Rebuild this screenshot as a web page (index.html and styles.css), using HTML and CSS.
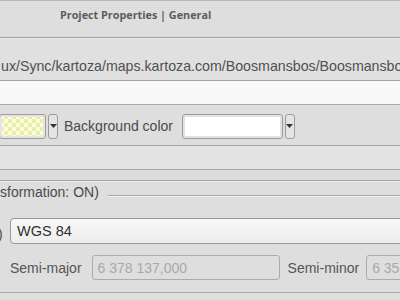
FILE: index.html
```html
<!DOCTYPE html>
<html lang="en">
<head>
    <meta charset="UTF-8">
    <title>Project Properties | General</title>
    <link rel="stylesheet" href="styles.css">
</head>
<body>

<div class="dialog">
    <header class="title-bar">Project Properties | General</header>

    <div class="path-row">ux/Sync/kartoza/maps.kartoza.com/Boosmansbos/Boosmansbos.qgs</div>
    <div class="blank-field"></div>

    <div class="color-row">
        <div class="color-button">
            <span class="swatch swatch-checker"></span>
            <span class="drop"><svg width="7" height="4" viewBox="0 0 7 4"><path d="M0 0h7L3.5 4z" fill="#333"/></svg></span>
        </div>
        <span class="label">Background color</span>
        <div class="color-button">
            <span class="swatch swatch-white"></span>
            <span class="drop"><svg width="7" height="4" viewBox="0 0 7 4"><path d="M0 0h7L3.5 4z" fill="#333"/></svg></span>
        </div>
    </div>

    <div class="band band-tall"></div>
    <div class="band band-short"></div>

    <section class="group">
        <div class="group-title">
            <span>sformation: ON)</span>
            <span class="group-rule"></span>
        </div>

        <div class="ellipsoid-row">
            <span class="cut">)</span>
            <div class="combo">WGS 84</div>
        </div>

        <div class="axis-row">
            <span class="label">Semi-major</span>
            <div class="num-field major">6 378 137,000</div>
            <span class="label">Semi-minor</span>
            <div class="num-field minor">6 356 752,314</div>
        </div>
    </section>
</div>

</body>
</html>
```

FILE: styles.css
```css
/* Basic Reset */
*,
*::before,
*::after {
    box-sizing: border-box;
    margin: 0;
    padding: 0;
}

html, body {
    width: 400px;
    height: 300px;
    overflow: hidden;
    background-color: #dedede;
    font-family: "Liberation Sans", Arial, sans-serif;
    color: #4a4a4a;
}

.dialog {
    display: flex;
    flex-direction: column;
    width: 400px;
    overflow: hidden;
}

/* --- Title bar --- */
.title-bar {
    height: 38px;
    padding: 6px 0 0 60px;
    font-family: "Open Sans", sans-serif;
    font-size: 10.8px;
    font-weight: 700;
    color: #5c5c5c;
    border-top: 1px solid #b8b8b8;
    border-bottom: 1px solid #9f9f9f;
}

/* --- Project file path --- */
.path-row {
    height: 43px;
    padding: 18px 0 0 1px;
    font-size: 14.2px;
    line-height: 18px;
    white-space: nowrap;
    overflow: hidden;
    color: #505050;
    background-color: #e0e0e0;
    border-top: 1px solid #ececec;
    border-bottom: 1px solid #a4a4a4;
}

.blank-field {
    height: 24px;
    background-color: #f9f9f9;
    border-bottom: 1px solid #a8a8a8;
}

/* --- Selection / background colour --- */
.color-row {
    height: 41px;
    display: flex;
    align-items: center;
    padding-top: 2px;
    border-bottom: 1px solid #a4a4a4;
}

.color-button {
    display: flex;
    gap: 2px;
    height: 25px;
}

.swatch {
    display: block;
    height: 25px;
    border: 1px solid #9c9c9c;
    border-radius: 3px;
    padding: 2px;
    background-color: #e8e8e8;
}

.swatch-checker {
    width: 47px;
    margin-left: -1px;
    background-image:
        linear-gradient(45deg, #e9f0a0 25%, transparent 25%, transparent 75%, #e9f0a0 75%),
        linear-gradient(45deg, #e9f0a0 25%, #fbfbe8 25%, #fbfbe8 75%, #e9f0a0 75%);
    background-size: 8px 8px;
    background-position: 0 0, 4px 4px;
    box-shadow: inset 0 0 0 2px #e4e4e4;
}

.swatch-white {
    width: 101px;
    background-color: #ffffff;
    box-shadow: inset 0 0 0 2px #e2e2e2;
}

.drop {
    display: flex;
    align-items: center;
    justify-content: center;
    width: 10px;
    height: 25px;
    border: 1px solid #9c9c9c;
    border-radius: 3px;
    background-color: #e4e4e4;
}

.color-row .label {
    margin: 0 9px 0 6px;
    font-size: 14px;
}

.band {
    border-bottom: 1px solid #a8a8a8;
}

.band-tall {
    height: 24px;
    background-color: #e3e3e3;
}

.band-short {
    height: 11px;
    background-color: #dcdcdc;
}

/* --- Ellipsoid group --- */
.group {
    height: 112px;
    display: flex;
    flex-direction: column;
    border-top: 1px solid #ececec;
    border-bottom: 1px solid #a8a8a8;
}

.group-title {
    display: flex;
    align-items: center;
    gap: 9px;
    height: 18px;
    margin-top: 1px;
    font-size: 14px;
    white-space: nowrap;
}

.group-rule {
    flex: 1;
    height: 2px;
    margin-top: 8px;
    border-top: 1px solid #a8a8a8;
    border-bottom: 1px solid #f0f0f0;
}

.ellipsoid-row {
    display: flex;
    align-items: center;
    margin-top: 17px;
    height: 26px;
}

.cut {
    width: 10px;
    text-indent: -2px;
    padding-top: 6px;
    font-size: 14px;
}

.combo {
    flex: 1;
    height: 26px;
    margin-right: -10px;
    padding: 4px 0 0 6px;
    font-size: 14.5px;
    color: #303030;
    background: linear-gradient(#f8f8f8, #ededed);
    border: 1px solid #9a9a9a;
    border-radius: 4px;
}

.axis-row {
    display: flex;
    align-items: center;
    margin-top: 11px;
    padding-left: 10px;
    white-space: nowrap;
}

.axis-row .label {
    font-size: 14px;
    color: #555;
}

.num-field {
    flex-shrink: 0;
    height: 25px;
    padding: 4px 0 0 5px;
    font-size: 14px;
    color: #a9a9a9;
    border: 1px solid #acacac;
    border-radius: 3px;
    background-color: #dedede;
    overflow: hidden;
}

.major {
    width: 188px;
    margin: 0 8px 0 10px;
}

.minor {
    width: 80px;
    margin-left: 7px;
}
```
